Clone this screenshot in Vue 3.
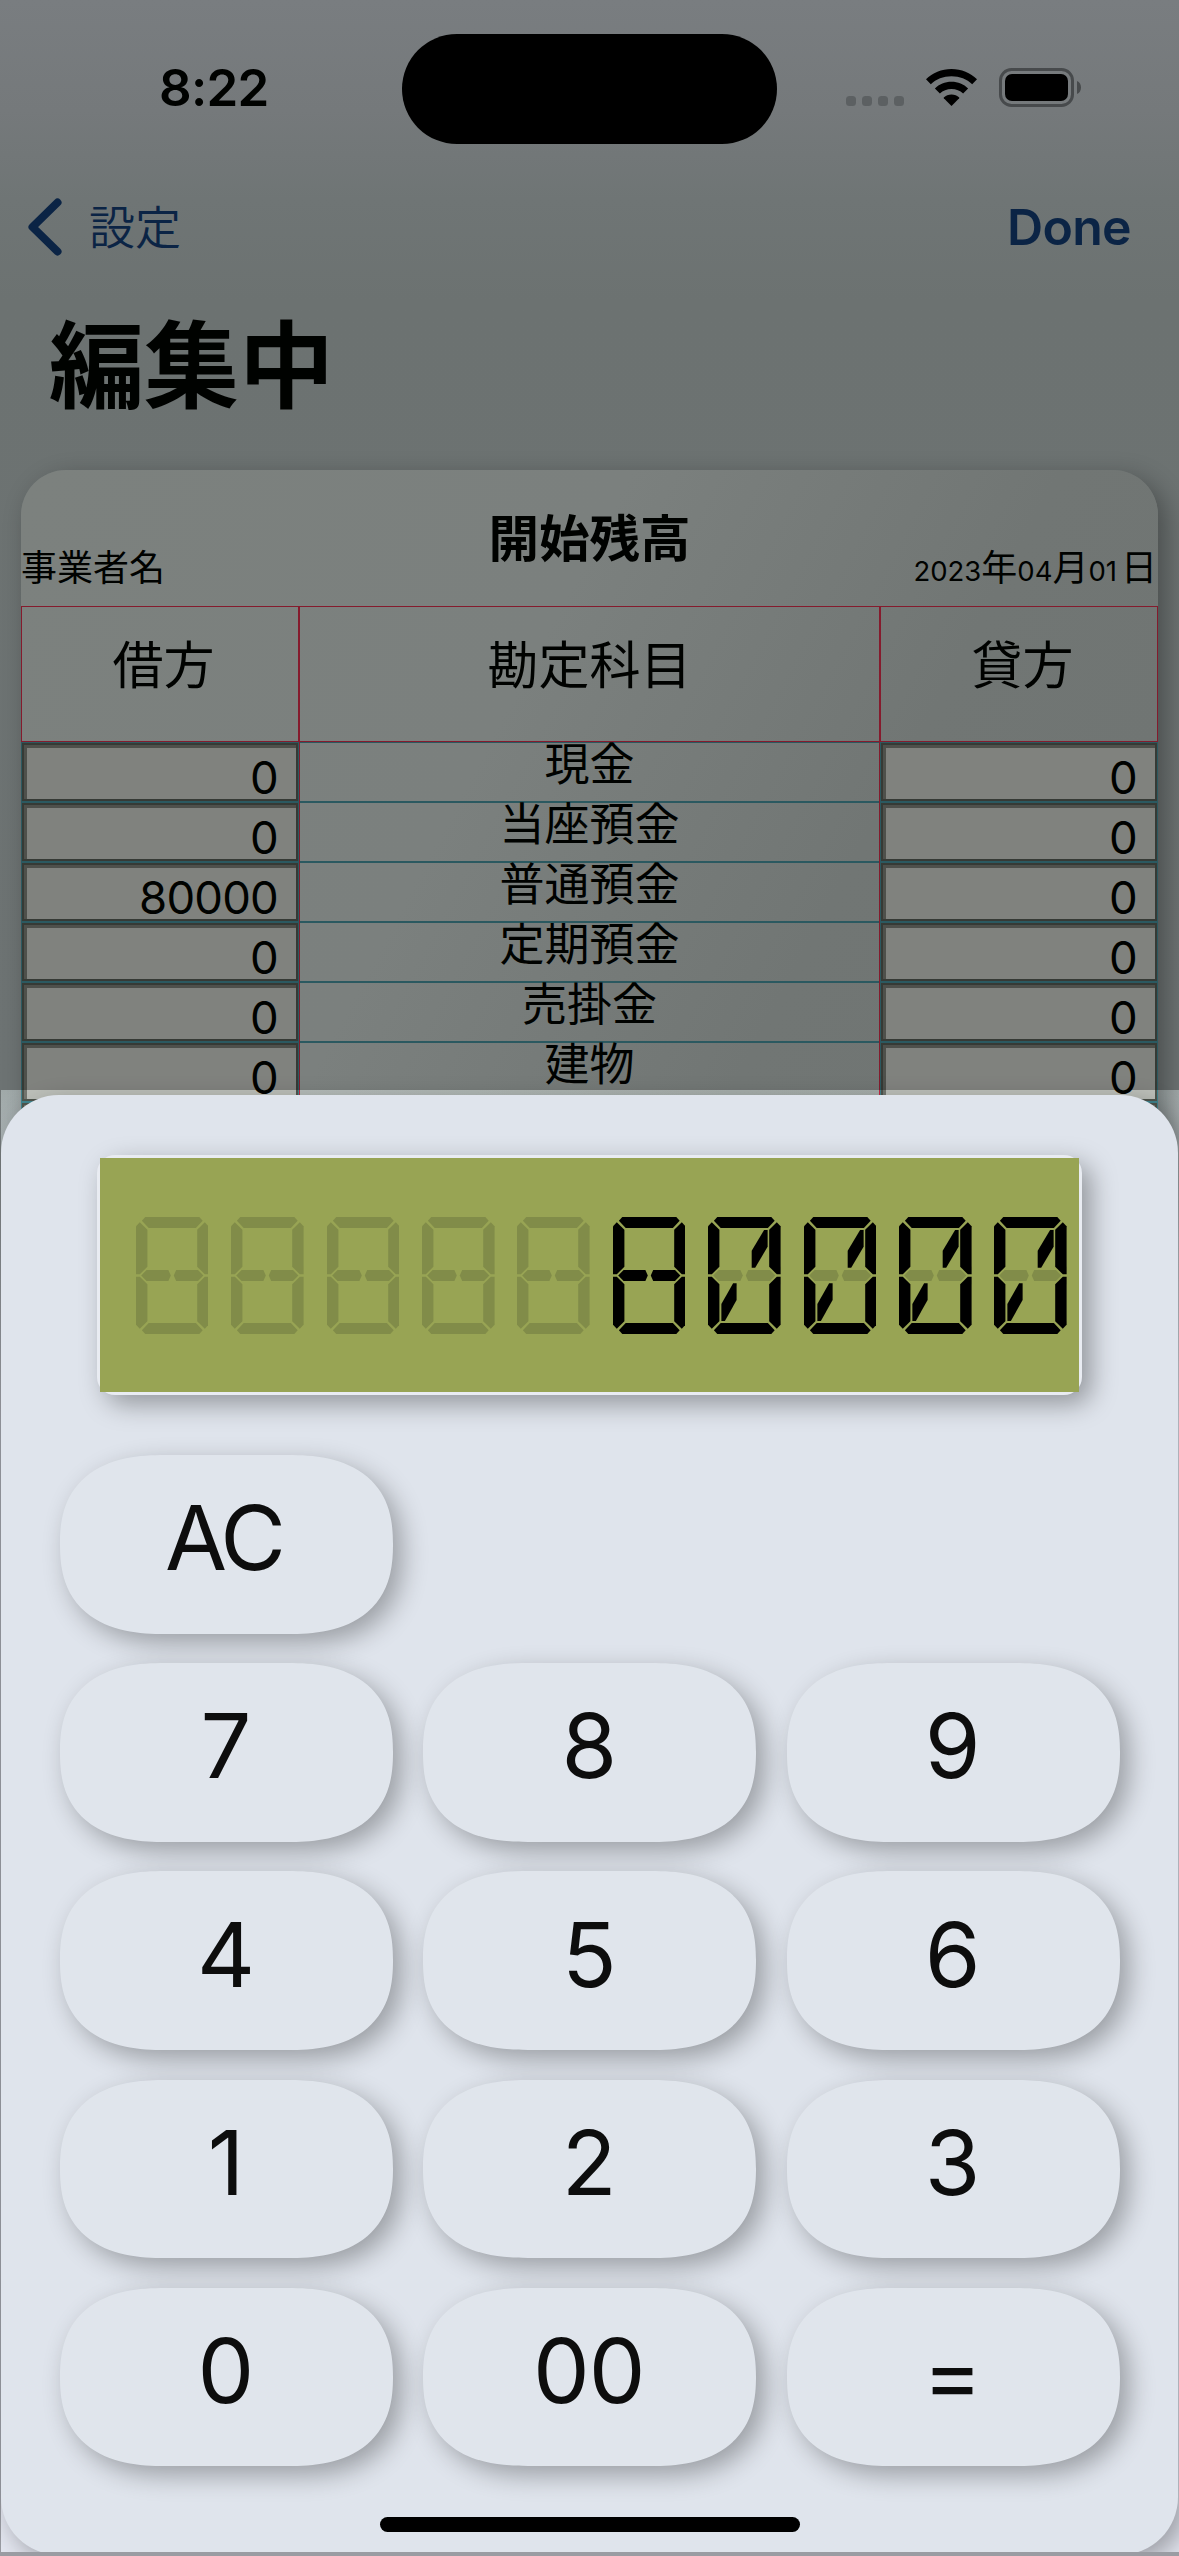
<script setup>
const accounts = [
  { name: '現金', debit: '0', credit: '0' },
  { name: '当座預金', debit: '0', credit: '0' },
  { name: '普通預金', debit: '80000', credit: '0' },
  { name: '定期預金', debit: '0', credit: '0' },
  { name: '売掛金', debit: '0', credit: '0' },
  { name: '建物', debit: '0', credit: '0' },
  { name: '', debit: '', credit: '' }
]

const keys = ['AC', '', '', '7', '8', '9', '4', '5', '6', '1', '2', '3', '0', '00', '=']

// LCD segments on a 72.6 x 117 cell
const frame = [
  '5.9,3.7 9.3,0 63.3,0 66.7,3.7 59.9,11 12.7,11',
  '0,9.3 3.8,5.3 11.4,12.7 11.4,49.7 3.8,57.3 0,57.3',
  '72.6,9.3 68.8,5.3 61.2,12.7 61.2,49.7 68.8,57.3 72.6,57.3',
  '0,107.7 3.8,111.7 11.4,104.3 11.4,67.3 3.8,59.7 0,59.7',
  '72.6,107.7 68.8,111.7 61.2,104.3 61.2,67.3 68.8,59.7 72.6,59.7',
  '5.9,113.3 9.3,117 63.3,117 66.7,113.3 59.9,106 12.7,106'
]
const middle = [
  '5.2,58.5 10.6,53 32.4,53 34.8,58.5 32.4,64 10.6,64',
  '67.4,58.5 62,53 40.2,53 37.8,58.5 40.2,64 62,64'
]
const slash = [
  '56.1,13 59.6,13 59.6,29.7 47.2,50.7 43.7,50.7 43.7,33.7',
  '25.1,66.3 28.6,66.3 28.6,83 16.9,104 13.4,104 13.4,87'
]
const digits = ['', '', '', '', '', '8', '0', '0', '0', '0']
</script>

<template>
  <div class="screen">
    <header class="status">
      <span class="time">8:22</span>
      <span class="island"></span>
      <div class="indicators">
        <div class="dots"><i v-for="n in 4" :key="n"></i></div>
        <svg class="wifi" width="51" height="37" viewBox="0 0 51 37">
          <path d="M25.5 0C35.400 0 44.500 3.900 51 10.300L46.200 15.300C40.900 10.200 33.600 7.300 25.500 7.300S10.100 10.200 4.800 15.300L0 10.300C6.500 3.900 15.600 0 25.500 0Z" />
          <path d="M25.500 12.800C32 12.800 37.800 15.300 42.100 19.400L37.100 24.600C34.100 21.800 30 20.100 25.500 20.100S16.900 21.800 13.900 24.600L8.900 19.400C13.200 15.300 19 12.800 25.500 12.800Z" />
          <path d="M25.500 25.400C28.500 25.400 31.200 26.500 33.200 28.400Q33.500 28.800 33.200 29.200L25.500 37L17.800 29.200Q17.500 28.800 17.800 28.400C19.800 26.500 22.500 25.400 25.500 25.400Z" />
        </svg>
        <svg class="battery" width="83" height="39" viewBox="0 0 83 39">
          <rect x="1.500" y="1.500" width="72" height="36" rx="11" fill="none" stroke="#474a4c" stroke-width="3" />
          <rect x="6" y="6" width="63" height="27" rx="7" />
          <path d="M78 13C80.700 14.200 82 16.600 82 19.500S80.700 24.800 78 26Z" fill="#474a4c" />
        </svg>
      </div>
    </header>

    <nav class="nav">
      <div class="back">
        <svg width="34" height="58" viewBox="0 0 34 58">
          <path d="M29.500 4.500L4.500 29L29.500 53.500" fill="none" stroke="#0b2445" stroke-width="8" stroke-linecap="round" stroke-linejoin="round" />
        </svg>
        <span>設定</span>
      </div>
      <span class="done">Done</span>
    </nav>

    <h1 class="title">編集中</h1>

    <section class="card">
      <div class="card-head">
        <span class="owner">事業者名</span>
        <h2>開始残高</h2>
        <span class="date">2023<b>年</b>04<b>月</b>01<b class="day">日</b></span>
      </div>
      <div class="cols heads">
        <div>借方</div>
        <div>勘定科目</div>
        <div>貸方</div>
      </div>
      <div v-for="(a, i) in accounts" :key="i" class="cols row">
        <div class="cell"><span class="field">{{ a.debit }}</span></div>
        <div class="name">{{ a.name }}</div>
        <div class="cell"><span class="field">{{ a.credit }}</span></div>
      </div>
    </section>

    <div class="pad-layer">
      <div class="pad">
        <div class="lcd-frame">
          <div class="lcd">
            <svg v-for="(d, i) in digits" :key="i" width="72.6" height="117" viewBox="0 0 72.6 117">
              <polygon v-for="p in frame" :key="p" :points="p" :class="d ? 'on' : 'off'" />
              <polygon v-for="p in middle" :key="p" :points="p" :class="d === '8' ? 'on' : 'off'" />
              <template v-if="d === '0'">
                <polygon v-for="p in slash" :key="p" :points="p" class="on" />
              </template>
            </svg>
          </div>
        </div>
        <div class="keys">
          <template v-for="(k, i) in keys" :key="i">
            <button v-if="k" class="key" :class="{ wide: k === 'AC', equals: k === '=' }">{{ k }}</button>
            <span v-else></span>
          </template>
        </div>
        <div class="home"></div>
      </div>
    </div>
    <div class="bottom-edge"></div>
  </div>
</template>

<style>
body {
  margin: 0;
}
</style>

<style scoped>
* {
  box-sizing: border-box;
}
.screen {
  position: relative;
  width: 1179px;
  height: 2556px;
  overflow: hidden;
  color: #000200;
  font-family: Inter, 'Noto Sans CJK JP', sans-serif;
  background: linear-gradient(180deg, #797d80 0, #75797b 110px, #6f7575 200px, #6c7271 300px, #6d7373 1090px, #9a9ca3 1420px);
}
.status {
  display: grid;
  grid-template-columns: 402px 375px 1fr;
  height: 178px;
  padding-top: 34px;
}
.time {
  padding-left: 159px;
  font-size: 51px;
  font-weight: 600;
  line-height: 108px;
  letter-spacing: -0.7px;
}
.island {
  height: 110px;
  border-radius: 55px;
  background: #000;
}
.indicators {
  display: flex;
  align-items: flex-start;
  padding: 34px 0 0 69px;
}
.dots {
  display: flex;
  gap: 6px;
  padding-top: 28px;
  width: 80px;
}
.dots i {
  width: 10px;
  height: 10px;
  border-radius: 3.5px;
  background: #5c6062;
}
.wifi {
  margin-top: 1px;
}
.battery {
  margin-left: 22px;
}
.nav {
  display: flex;
  justify-content: space-between;
  align-items: center;
  height: 97px;
  padding: 0 48px 0 28px;
  color: #0b2445;
}
.back {
  display: flex;
  align-items: center;
  gap: 27px;
  font-size: 46px;
  line-height: 58px;
  font-weight: 350;
}
.done {
  font-size: 50px;
  font-weight: 600;
  letter-spacing: -0.7px;
}
.title {
  margin: 0;
  height: 195px;
  padding: 44px 0 0 49px;
  font-size: 95px;
  line-height: 96px;
  font-weight: 700;
}
.card {
  width: 1137px;
  height: 740px;
  margin-left: 21px;
  border-radius: 45px 45px 0 0;
  background: linear-gradient(118deg, #7c817e 0, #7b807e 40%, #717674 68%, #6f7472 100%);
  box-shadow: 8px 8px 26px rgba(0, 0, 0, 0.32);
}
.card-head {
  display: grid;
  grid-template-columns: 1fr 300px 1fr;
  height: 136px;
}
.card-head h2 {
  margin: 0;
  padding-top: 39px;
  text-align: center;
  font-size: 50.500px;
  line-height: 60px;
  font-weight: 700;
}
.owner {
  padding-top: 73px;
  font-size: 36px;
  line-height: 50px;
}
.date {
  padding: 73px 1px 0 0;
  text-align: right;
  font-size: 27.500px;
  line-height: 50px;
  white-space: nowrap;
}
.date b {
  font-weight: 400;
  font-size: 36px;
}
.date .day {
  margin-left: 4px;
}
.cols {
  display: grid;
  grid-template-columns: 278px 581px 278px;
}
.heads {
  height: 136px;
  font-size: 51px;
  line-height: 118px;
  text-align: center;
}
.heads div {
  border: 1px solid #851b2d;
}
.heads div:nth-child(odd) {
  padding-left: 7px;
}
.row {
  height: 60px;
}
.cell {
  border: 1px solid #2b5960;
}
.field {
  display: block;
  height: 58px;
  border: 2px solid #363a35;
  background: #80827e;
  box-shadow: inset 3px 3px 0 #4e504b;
  padding: 7px 18px 0 0;
  text-align: right;
  font-size: 45.500px;
  line-height: 52px;
  letter-spacing: -0.8px;
}
.name {
  border: 1px solid #851b2d;
  border-width: 0 1px;
  text-align: center;
  font-size: 45px;
  line-height: 46px;
  background: linear-gradient(#2b5960, #2b5960) top / 100% 1px no-repeat, linear-gradient(#2b5960, #2b5960) bottom / 100% 1px no-repeat;
}
.pad-layer {
  position: absolute;
  left: 1px;
  top: 1090px;
  right: 0;
  bottom: 0;
  padding-top: 5px;
  backdrop-filter: brightness(1.48);
}
.pad {
  display: flex;
  flex-direction: column;
  width: 1177px;
  height: 1460px;
  border-radius: 58px;
  background: #dfe4ec;
  box-shadow: 8px 8px 26px rgba(0, 0, 0, 0.32);
}
.lcd-frame {
  width: 985px;
  height: 240px;
  margin: 60px 0 0 96px;
  border-radius: 18px;
  background: #e9ecf2;
  padding: 3px;
  box-shadow: 9px 9px 26px rgba(0, 0, 0, 0.34);
}
.lcd {
  display: flex;
  align-items: center;
  gap: 22.800px;
  height: 234px;
  padding-left: 35.800px;
  background: #98a454;
}
.lcd svg {
  flex: none;
}
.on {
  fill: #000;
}
.off {
  fill: #818c49;
}
.keys {
  display: grid;
  grid-template-columns: repeat(3, 333px);
  grid-auto-rows: 178.500px;
  gap: 29.700px 30.300px;
  margin: 60px 0 0 59px;
}
.key {
  border: 0;
  padding: 0 2px 12px 0;
  border-radius: 82px;
  background: #e0e5ec;
  color: #0d0d0d;
  font-family: Inter, sans-serif;
  font-size: 90px;
  line-height: 1;
  letter-spacing: -1px;
  box-shadow: 9px 9px 26px rgba(0, 0, 0, 0.31);
}
@supports (corner-shape: superellipse(1.3)) {
  .key {
    border-radius: 105px / 89px;
    corner-shape: superellipse(1.3);
  }
}
.key.wide {
  padding-right: 6px;
  letter-spacing: -4px;
}
.key.equals {
  padding-bottom: 4px;
}
.home {
  width: 420px;
  height: 15px;
  margin: 51px 0 0 379px;
  border-radius: 8px;
  background: #000;
}
.bottom-edge {
  position: absolute;
  left: 0;
  right: 0;
  bottom: 0;
  height: 4px;
  background: #9a9ca3;
}
</style>
